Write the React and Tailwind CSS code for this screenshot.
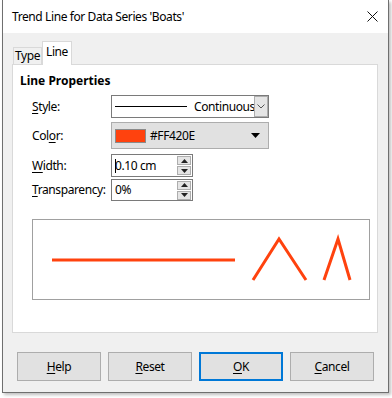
import React from "react";

const font = { fontFamily: '"Noto Sans", "Open Sans", sans-serif' };

const Ul = ({ children }) => <span className="underline underline-offset-2">{children}</span>;

const Spin = ({ value, caret }) => (
  <div className="flex h-full w-[82px] items-center border border-[#7a7a7a] bg-white pl-[3px]">
    {caret && <span className="mr-[-1px] inline-block h-[14px] w-px bg-black" />}
    <span className="flex-1 text-[12px] leading-none">{value}</span>
    <div className="mr-px flex flex-col gap-px">
      <div className="flex h-[9px] w-[14px] items-center justify-center border border-[#adadad] bg-[#e5e5e5]">
        <svg width="7" height="4" viewBox="0 0 7 4"><path d="M0 4 L3.5 0 L7 4 Z" fill="#222" /></svg>
      </div>
      <div className="flex h-[9px] w-[14px] items-center justify-center border border-[#adadad] bg-[#e5e5e5]">
        <svg width="7" height="4" viewBox="0 0 7 4"><path d="M0 0 L3.5 4 L7 0 Z" fill="#222" /></svg>
      </div>
    </div>
  </div>
);

const Btn = ({ children, def }) => (
  <div
    className={`flex h-[29px] w-[84px] items-center justify-center bg-[#e1e1e1] text-[12px] ${
      def ? "border-2 border-[#0078d7]" : "border border-[#adadad]"
    }`}
  >
    {children}
  </div>
);

export default function App() {
  return (
    <div className="h-[398px] w-[392px] bg-white tracking-[-0.4px] text-black" style={font}>
      <div className="ml-[2px] flex h-[393px] w-[387px] flex-col border border-t-0 border-[#6f6f6f] bg-[#f0f0f0] shadow-[2px_2px_3px_rgba(0,0,0,0.25)]">
        {/* title bar */}
        <div className="flex h-[33px] items-center justify-between bg-white pl-[9px] pr-[10px]">
          <span className="text-[12px]">Trend Line for Data Series 'Boats'</span>
          <svg width="11" height="11" viewBox="0 0 11 11">
            <path d="M0.5 0.5 L10.5 10.5 M10.5 0.5 L0.5 10.5" stroke="#111" strokeWidth="1" />
          </svg>
        </div>

        {/* tabs */}
        <div className="ml-[10px] mt-[8px] flex items-end">
          <div className="flex h-[17px] w-[29px] items-center justify-center border border-b-0 border-[#d9d9d9] bg-[#f0f0f0] text-[12px]">
            Type
          </div>
          <div className="relative z-10 -mb-px flex h-[24px] w-[30px] items-center justify-center border border-b-0 border-[#d9d9d9] bg-white pb-[4px] text-[12px]">
            Line
          </div>
        </div>

        {/* panel */}
        <div className="ml-[9px] flex h-[269px] w-[366px] flex-col border border-[#d9d9d9] bg-white">
          <div className="ml-[7px] mt-[8px] text-[12px] font-bold leading-[16px] tracking-normal">Line Properties</div>

          <div className="ml-[19px] mt-[6px] flex h-[23px] items-center">
            <span className="w-[79px] text-[12px]"><Ul>S</Ul>tyle:</span>
            <div className="flex h-full w-[158px] items-center overflow-hidden border border-[#7a7a7a] bg-white">
              <span className="ml-[3px] inline-block h-px w-[72px] shrink-0 bg-black" />
              <span className="ml-[7px] w-[60px] shrink-0 overflow-hidden whitespace-nowrap text-[12px]">Continuous</span>
              <div className="flex h-full w-[14px] shrink-0 items-center justify-center border border-[#adadad] bg-[#e5e5e5]">
                <svg width="8" height="5" viewBox="0 0 8 5"><path d="M0.5 0.5 L4 4 L7.5 0.5" fill="none" stroke="#555" /></svg>
              </div>
            </div>
          </div>

          <div className="ml-[19px] mt-[4px] flex h-[27px] items-center">
            <span className="w-[79px] text-[12px]">Col<Ul>o</Ul>r:</span>
            <div className="flex h-full w-[158px] items-center border border-[#adadad] bg-[#e1e1e1] pl-[3px] pr-[8px]">
              <span className="inline-block h-[14px] w-[31px] border border-[#8a8a8a] bg-[#FF420E]" />
              <span className="ml-[4px] flex-1 text-[12px]">#FF420E</span>
              <svg width="9" height="5" viewBox="0 0 9 5"><path d="M0 0 L4.5 5 L9 0 Z" fill="#000" /></svg>
            </div>
          </div>

          <div className="ml-[19px] mt-[5px] flex h-[23px] items-center">
            <span className="w-[79px] text-[12px]"><Ul>W</Ul>idth:</span>
            <Spin value="0.10 cm" caret />
          </div>

          <div className="ml-[19px] mt-[2px] flex h-[22px] items-center">
            <span className="w-[79px] text-[12px]"><Ul>T</Ul>ransparency:</span>
            <Spin value="0%" />
          </div>

          <div className="ml-[19px] mt-[18px] h-[81px] w-[338px] border border-[#a0a0a0] bg-white">
            <svg width="336" height="79" viewBox="1 1 336 79">
              <g stroke="#FF420E" strokeWidth="3" fill="none">
                <path d="M20 41 H203" />
                <path d="M221 61 L247 20 L274 61" />
                <path d="M292 61 L306 20 L318 61" />
              </g>
            </svg>
          </div>
        </div>

        {/* buttons */}
        <div className="ml-[14px] mt-[19px] flex gap-[7px]">
          <Btn><span><Ul>H</Ul>elp</span></Btn>
          <Btn><span><Ul>R</Ul>eset</span></Btn>
          <Btn def><span><Ul>O</Ul>K</span></Btn>
          <Btn><span><Ul>C</Ul>ancel</span></Btn>
        </div>
      </div>
    </div>
  );
}
